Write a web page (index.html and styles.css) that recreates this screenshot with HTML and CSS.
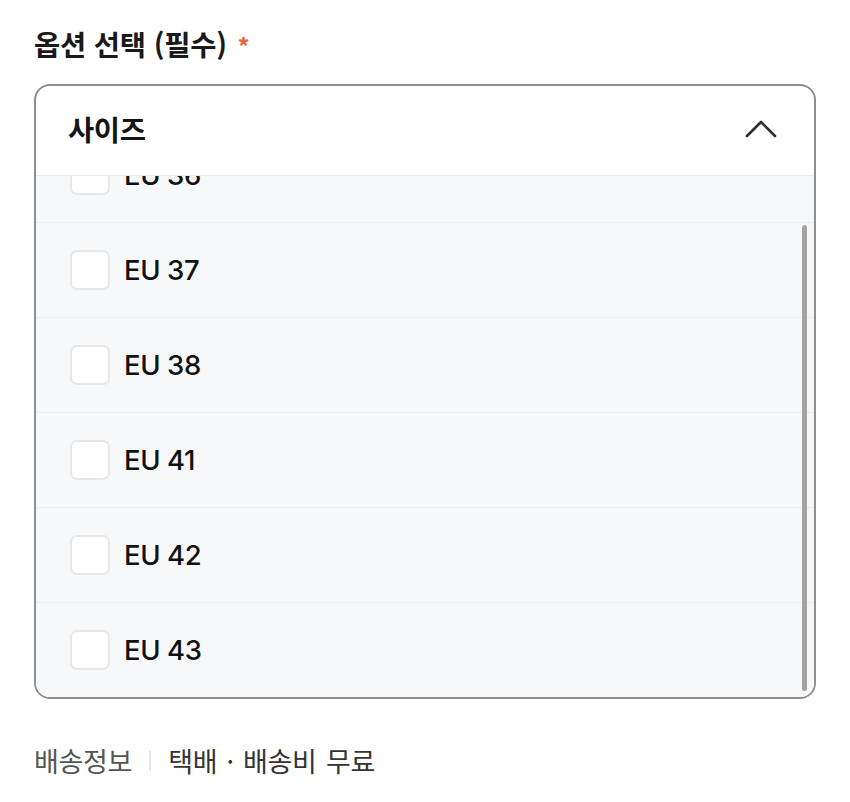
FILE: index.html
```html
<!DOCTYPE html>
<html lang="ko">
<head>
<meta charset="utf-8">
<link rel="stylesheet" href="styles.css">
</head>
<body>
<div class="page">
  <div class="field-label">옵션 선택 (필수) <span class="req">*</span></div>
  <div class="select">
    <div class="select-head">
      <span class="select-title">사이즈</span>
      <svg class="chev" width="32" height="20" viewBox="0 0 32 20"><polyline points="2,18 16,4 30,18" fill="none" stroke="#2e2e2e" stroke-width="2.6" stroke-linecap="round" stroke-linejoin="round"/></svg>
    </div>
    <div class="list-wrap">
      <div class="list">
        <div class="list-inner">
          <label class="row"><span class="box"></span><span class="opt">EU 36</span></label>
          <label class="row"><span class="box"></span><span class="opt">EU 37</span></label>
          <label class="row"><span class="box"></span><span class="opt">EU 38</span></label>
          <label class="row"><span class="box"></span><span class="opt">EU 41</span></label>
          <label class="row"><span class="box"></span><span class="opt">EU 42</span></label>
          <label class="row"><span class="box"></span><span class="opt">EU 43</span></label>
        </div>
      </div>
      <div class="thumb"></div>
    </div>
  </div>
  <div class="ship">
    <span class="ship-k">배송정보</span>
    <span class="sep"></span>
    <span class="ship-v">택배 · 배송비 무료</span>
  </div>
</div>
</body>
</html>
```
FILE: styles.css
```css
* { box-sizing: border-box; }
html, body { margin: 0; padding: 0; background: #fff; }
body {
  font-family: Inter, "Noto Sans CJK KR", "Noto Sans", sans-serif;
  color: #111;
}
.page {
  padding: 24px 34px 0 34px;
  width: 850px;
}
.field-label {
  font-family: "Noto Sans CJK KR", sans-serif;
  font-size: 28.5px;
  font-weight: 600;
  line-height: 39px;
  height: 39px;
  color: #1a1a1a;
  letter-spacing: -0.2px;
}
.req {
  color: #e8603c;
  font-size: 24px;
  font-weight: 700;
  margin-left: 3px;
}
.select {
  margin-top: 21px;
  width: 782px;
  border: 2px solid #8f8f8f;
  border-radius: 16px;
  overflow: hidden;
  background: #fff;
}
.select-head {
  height: 90px;
  border-bottom: 1px solid #e9eaec;
  display: flex;
  align-items: center;
  justify-content: space-between;
  padding: 0 37px 0 32px;
}
.select-title {
  font-family: "Noto Sans CJK KR", sans-serif;
  font-size: 28.5px;
  font-weight: 700;
  color: #141414;
  letter-spacing: -0.4px;
  margin-top: -4px;
}
.chev { display: block; margin-top: -6px; }
.list-wrap {
  position: relative;
}
.list {
  height: 521px;
  overflow-y: auto;
  background: #f7f8fa;
  display: flex;
  flex-direction: column-reverse;
  scrollbar-width: none;
}
.list::-webkit-scrollbar { display: none; }
.list-inner { flex: none; }
.thumb {
  position: absolute;
  right: 7px;
  top: 49px;
  width: 5px;
  height: 466px;
  border-radius: 3px;
  background: #a3a3a3;
}
.row {
  height: 95px;
  border-top: 1px solid #eceef1;
  display: flex;
  align-items: center;
  padding-left: 34px;
}
.box {
  width: 40px;
  height: 40px;
  border: 2px solid #e6e7e9;
  border-radius: 7px;
  background: #fff;
  flex: none;
}
.opt {
  margin-left: 14px;
  font-size: 27.5px;
  font-weight: 500;
  color: #111;
  letter-spacing: -0.4px;
}
.ship {
  margin-top: 44px;
  display: flex;
  align-items: center;
  font-family: "Noto Sans CJK KR", sans-serif;
  font-size: 27px;
  line-height: 36px;
  letter-spacing: -0.3px;
}
.ship-k { color: #555; }
.sep {
  width: 2px;
  height: 20px;
  background: #e4e4e4;
  margin: 0 17px;
}
.ship-v { color: #333; word-spacing: 2px; }
```
